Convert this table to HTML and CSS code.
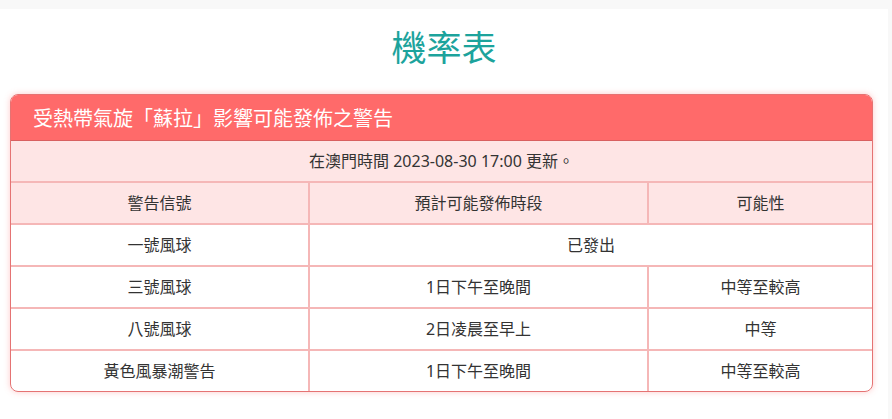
FILE: index.html
```html
<!DOCTYPE html>
<html lang="zh-Hant">
<head>
<meta charset="utf-8">
<title>機率表</title>
<link rel="stylesheet" href="styles.css">
</head>
<body>
<div class="page">
  <h1 class="title">機率表</h1>
  <div class="card">
    <div class="card-head">受熱帶氣旋「蘇拉」影響可能發佈之警告</div>
    <table class="prob">
      <colgroup>
        <col class="c1"><col class="c2"><col class="c3">
      </colgroup>
      <tr class="tinted">
        <td colspan="3">在澳門時間 2023-08-30 17:00 更新。</td>
      </tr>
      <tr class="tinted">
        <td>警告信號</td><td>預計可能發佈時段</td><td>可能性</td>
      </tr>
      <tr>
        <td>一號風球</td><td colspan="2">已發出</td>
      </tr>
      <tr>
        <td>三號風球</td><td>1日下午至晚間</td><td>中等至較高</td>
      </tr>
      <tr>
        <td>八號風球</td><td>2日凌晨至早上</td><td>中等</td>
      </tr>
      <tr>
        <td>黃色風暴潮警告</td><td>1日下午至晚間</td><td>中等至較高</td>
      </tr>
    </table>
  </div>
</div>
</body>
</html>
```
FILE: styles.css
```css
html, body {
  margin: 0;
  padding: 0;
  background: #f8f8f8;
}
body {
  font-family: "Noto Sans", "Noto Sans CJK TC", sans-serif;
  color: #333;
}
.page {
  margin-top: 9px;
  width: 888px;
  height: 410px;
  background: #fff;
  padding: 1px 0 0 0;
  box-sizing: border-box;
}
.title {
  margin: 15px 0 0 0;
  text-align: center;
  font-weight: 400;
  font-size: 35px;
  line-height: 42px;
  color: #1ca39c;
  font-family: "Noto Sans CJK TC", sans-serif;
}
.card {
  margin: 27px 0 0 10px;
  width: 863px;
  box-sizing: border-box;
  border: 1px solid #e57373;
  border-radius: 8px;
  overflow: hidden;
  box-shadow: 0 0 6px rgba(255, 110, 110, 0.35);
}
.card-head {
  background: #ff6a6a;
  color: #fff;
  font-size: 20px;
  font-family: "Noto Sans CJK TC", sans-serif;
  height: 46px;
  line-height: 46px;
  padding-left: 22px;
  border-bottom: 1px solid #d86060;
  box-sizing: border-box;
}
.prob {
  width: 100%;
  border-collapse: collapse;
  table-layout: fixed;
  font-size: 16px;
}
.c1 { width: 298px; }
.c2 { width: 339px; }
.c3 { width: auto; }
.prob td {
  border: 2px solid #f5b7b7;
  text-align: center;
  height: 40px;
  padding: 0;
  line-height: 20px;
}
.prob tr:first-child td { border-top: none; }
.prob tr:last-child td { border-bottom: none; }
.prob td:first-child { border-left: none; }
.prob td:last-child { border-right: none; }
.tinted td {
  background: #fee5e5;
}
```
